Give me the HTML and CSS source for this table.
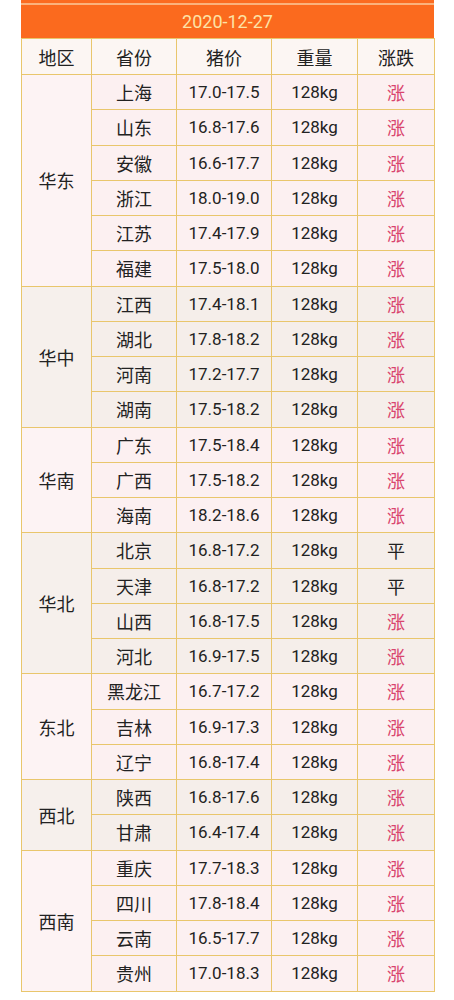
FILE: index.html
```html
<!DOCTYPE html>
<html lang="zh">
<head>
<meta charset="utf-8">
<link rel="stylesheet" href="styles.css">
</head>
<body>
<div class="page">
  <div class="strip"></div>
  <div class="title">2020-12-27</div>
  <table class="prices">
    <colgroup>
      <col class="c1"><col class="c2"><col class="c3"><col class="c4"><col class="c5">
    </colgroup>
    <thead>
      <tr><th>地区</th><th>省份</th><th>猪价</th><th>重量</th><th>涨跌</th></tr>
    </thead>
    <tbody class="pink">
      <tr><td rowspan="6" class="region">华东</td><td>上海</td><td>17.0-17.5</td><td>128kg</td><td class="up">涨</td></tr>
      <tr><td>山东</td><td>16.8-17.6</td><td>128kg</td><td class="up">涨</td></tr>
      <tr><td>安徽</td><td>16.6-17.7</td><td>128kg</td><td class="up">涨</td></tr>
      <tr><td>浙江</td><td>18.0-19.0</td><td>128kg</td><td class="up">涨</td></tr>
      <tr><td>江苏</td><td>17.4-17.9</td><td>128kg</td><td class="up">涨</td></tr>
      <tr><td>福建</td><td>17.5-18.0</td><td>128kg</td><td class="up">涨</td></tr>
    </tbody>
    <tbody class="beige">
      <tr><td rowspan="4" class="region">华中</td><td>江西</td><td>17.4-18.1</td><td>128kg</td><td class="up">涨</td></tr>
      <tr><td>湖北</td><td>17.8-18.2</td><td>128kg</td><td class="up">涨</td></tr>
      <tr><td>河南</td><td>17.2-17.7</td><td>128kg</td><td class="up">涨</td></tr>
      <tr><td>湖南</td><td>17.5-18.2</td><td>128kg</td><td class="up">涨</td></tr>
    </tbody>
    <tbody class="pink">
      <tr><td rowspan="3" class="region">华南</td><td>广东</td><td>17.5-18.4</td><td>128kg</td><td class="up">涨</td></tr>
      <tr><td>广西</td><td>17.5-18.2</td><td>128kg</td><td class="up">涨</td></tr>
      <tr><td>海南</td><td>18.2-18.6</td><td>128kg</td><td class="up">涨</td></tr>
    </tbody>
    <tbody class="beige">
      <tr><td rowspan="4" class="region">华北</td><td>北京</td><td>16.8-17.2</td><td>128kg</td><td class="flat">平</td></tr>
      <tr><td>天津</td><td>16.8-17.2</td><td>128kg</td><td class="flat">平</td></tr>
      <tr><td>山西</td><td>16.8-17.5</td><td>128kg</td><td class="up">涨</td></tr>
      <tr><td>河北</td><td>16.9-17.5</td><td>128kg</td><td class="up">涨</td></tr>
    </tbody>
    <tbody class="pink">
      <tr><td rowspan="3" class="region">东北</td><td>黑龙江</td><td>16.7-17.2</td><td>128kg</td><td class="up">涨</td></tr>
      <tr><td>吉林</td><td>16.9-17.3</td><td>128kg</td><td class="up">涨</td></tr>
      <tr><td>辽宁</td><td>16.8-17.4</td><td>128kg</td><td class="up">涨</td></tr>
    </tbody>
    <tbody class="beige">
      <tr><td rowspan="2" class="region">西北</td><td>陕西</td><td>16.8-17.6</td><td>128kg</td><td class="up">涨</td></tr>
      <tr><td>甘肃</td><td>16.4-17.4</td><td>128kg</td><td class="up">涨</td></tr>
    </tbody>
    <tbody class="pink">
      <tr><td rowspan="4" class="region">西南</td><td>重庆</td><td>17.7-18.3</td><td>128kg</td><td class="up">涨</td></tr>
      <tr><td>四川</td><td>17.8-18.4</td><td>128kg</td><td class="up">涨</td></tr>
      <tr><td>云南</td><td>16.5-17.7</td><td>128kg</td><td class="up">涨</td></tr>
      <tr><td>贵州</td><td>17.0-18.3</td><td>128kg</td><td class="up">涨</td></tr>
    </tbody>
  </table>
</div>
</body>
</html>
```
FILE: styles.css
```css
html, body {
  margin: 0;
  padding: 0;
  background: #ffffff;
}
body {
  font-family: Roboto, "Noto Sans CJK SC", sans-serif;
  color: #222222;
}
.page {
  width: 413px;
  margin-left: 21px;
}
.strip {
  height: 3px;
  background: #fb6b20;
  border-bottom: 2px solid #fbb27c;
}
.title {
  height: 33px;
  background: #fb6a1e;
  color: #fde3a6;
  font-size: 18px;
  line-height: 33px;
  text-align: center;
}
.prices {
  width: 413px;
  border-collapse: collapse;
  table-layout: fixed;
  font-size: 18px;
}
.c1 { width: 70px; }
.c2 { width: 85px; }
.c3 { width: 95px; }
.c4 { width: 86px; }
.c5 { width: 77px; }
.prices th,
.prices td {
  border: 1px solid #e9c66c;
  text-align: center;
  padding: 0;
  font-weight: normal;
}
.prices tbody td:nth-last-child(2),
.prices tbody td:nth-last-child(3) {
  font-size: 17px;
}
.prices thead th {
  height: 35px;
  background: #fcf6f3;
}
.prices tbody td {
  height: 34.25px;
}
.pink td { background: #fcf0f1; }
.beige td { background: #f5eeea; }
.pink td.region { background: #fdf3f4; }
.beige td.region { background: #f6f0ec; }
.up { color: #d9456e; }
.flat { color: #222222; }
```
